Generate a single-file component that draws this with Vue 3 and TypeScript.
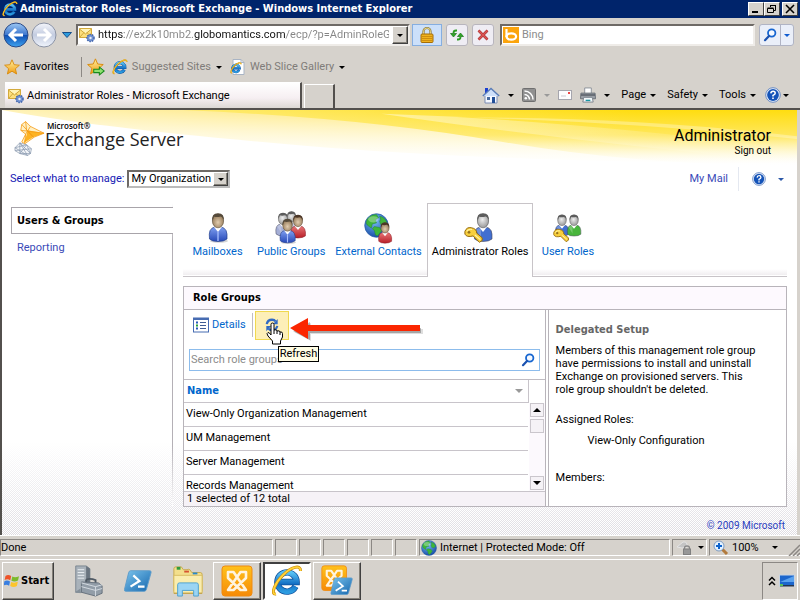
<script setup lang="ts">
import { ref } from 'vue'

interface RoleTab { id: string; label: string; icon: string; active?: boolean }
interface MenuItem { label: string }

const address = ref('https://ex2k10mb2.globomantics.com/ecp/?p=AdminRoleGro')
const webSearch = ref('')
const roleSearch = ref('')
const scope = ref('My Organization')

const menus: MenuItem[] = [{ label: 'Page' }, { label: 'Safety' }, { label: 'Tools' }]

const roleTabs: RoleTab[] = [
  { id: 'mailboxes', label: 'Mailboxes', icon: 'person' },
  { id: 'groups', label: 'Public Groups', icon: 'people' },
  { id: 'contacts', label: 'External Contacts', icon: 'contact' },
  { id: 'admin', label: 'Administrator Roles', icon: 'admin', active: true },
  { id: 'user', label: 'User Roles', icon: 'userroles' },
]

const roleGroups: string[] = [
  'View-Only Organization Management',
  'UM Management',
  'Server Management',
  'Records Management',
]
</script>

<template>
  <div class="screen">
    <svg class="sprite" width="0" height="0" aria-hidden="true">
      <defs>
        <linearGradient id="gBlue" x1="0" y1="0" x2="0" y2="1">
          <stop offset="0" stop-color="#9cc8f4" /><stop offset=".48" stop-color="#3f78cf" />
          <stop offset=".52" stop-color="#0e4fb4" /><stop offset="1" stop-color="#3fa4f0" />
        </linearGradient>
        <linearGradient id="gPale" x1="0" y1="0" x2="0" y2="1">
          <stop offset="0" stop-color="#f4f6fb" /><stop offset=".5" stop-color="#c3cce0" />
          <stop offset="1" stop-color="#f1f5fc" />
        </linearGradient>
        <linearGradient id="gGold" x1="0" y1="0" x2="0" y2="1">
          <stop offset="0" stop-color="#fff2a0" /><stop offset="1" stop-color="#f09a10" />
        </linearGradient>
        <linearGradient id="gOrange" x1="0" y1="0" x2="0" y2="1">
          <stop offset="0" stop-color="#ffc21c" /><stop offset="1" stop-color="#f68a06" />
        </linearGradient>
        <linearGradient id="gE" x1="0" y1="0" x2="0" y2="1">
          <stop offset="0" stop-color="#5ac2f4" /><stop offset=".6" stop-color="#136fc4" />
          <stop offset="1" stop-color="#2c9be0" />
        </linearGradient>
        <linearGradient id="gPs" x1="0" y1="0" x2="1" y2="1">
          <stop offset="0" stop-color="#7cc4ec" /><stop offset="1" stop-color="#1466ae" />
        </linearGradient>
        <linearGradient id="gSuit" x1="0" y1="0" x2="0" y2="1">
          <stop offset="0" stop-color="#7f9ff0" /><stop offset="1" stop-color="#2749b8" />
        </linearGradient>
        <linearGradient id="gRed" x1="0" y1="0" x2="0" y2="1">
          <stop offset="0" stop-color="#e87878" /><stop offset="1" stop-color="#b81e28" />
        </linearGradient>
        <radialGradient id="gSea" cx=".4" cy=".3" r=".8">
          <stop offset="0" stop-color="#7cc0f8" /><stop offset="1" stop-color="#0a3d9c" />
        </radialGradient>
        <radialGradient id="gSkin" cx=".5" cy=".6" r=".6">
          <stop offset="0" stop-color="#e2cdb0" /><stop offset="1" stop-color="#8f7452" />
        </radialGradient>
        <radialGradient id="gGrey" cx=".45" cy=".4" r=".7">
          <stop offset="0" stop-color="#eeeeee" /><stop offset="1" stop-color="#8c8c8c" />
        </radialGradient>
        <linearGradient id="gWave" x1="0" y1="0" x2="0" y2="1">
          <stop offset="0" stop-color="#ffdd10" /><stop offset=".45" stop-color="#ffe75c" />
          <stop offset="1" stop-color="#ffffff" stop-opacity="0" />
        </linearGradient>
        <linearGradient id="gWaveSoft" x1="0" y1="0" x2="0" y2="1">
          <stop offset="0" stop-color="#ffe25a" /><stop offset="1" stop-color="#fffbe0" stop-opacity="0" />
        </linearGradient>
        <linearGradient id="gSheen" x1="0" y1="0" x2="1" y2="0">
          <stop offset="0" stop-color="#ffffff" stop-opacity=".75" /><stop offset="1" stop-color="#ffffff" stop-opacity="0" />
        </linearGradient>
        <linearGradient id="gVeil" x1="0" y1="0" x2="1" y2="0">
          <stop offset="0" stop-color="#ffffff" stop-opacity=".55" /><stop offset=".8" stop-color="#ffffff" stop-opacity="0" />
        </linearGradient>
      </defs>

      <symbol id="ie" viewBox="0 0 32 32">
        <path d="M24.500 21.500A9.600 9.600 0 1 1 25.600 17H8.500" fill="none" stroke="#0b4c98" stroke-width="6.400" />
        <path d="M24.500 21.500A9.600 9.600 0 1 1 25.600 17H8.500" fill="none" stroke="url(#gE)" stroke-width="5" />
        <path d="M5 29C-1 30 4 18 12 10S30-1 29.500 6" fill="none" stroke="#c98705" stroke-width="3" />
        <path d="M5 29C-1 30 4 18 12 10S30-1 29.500 6" fill="none" stroke="#ffd33a" stroke-width="1.800" />
      </symbol>
      <symbol id="iepage" viewBox="0 0 16 16">
        <path d="M3 .5h8l3 3v12H3z" fill="#fff" stroke="#a9b4c4" /><path d="M11 .5v3h3" fill="none" stroke="#a9b4c4" />
        <use href="#ie" x="0" y="3" width="12" height="12" />
      </symbol>
      <symbol id="mailgear" viewBox="0 0 16 16">
        <path d="M.5 1.500h12v9H.5z" fill="#fddf7c" stroke="#d3aa3c" />
        <path d="M1 2l5.500 4.500L12 2z" fill="#fff3b8" /><path d="M.5 2l6 5 6-5M.5 10.500l4.500-5M12.500 10.500l-4.500-5" fill="none" stroke="#c59a2c" stroke-width=".8" />
        <circle cx="11.500" cy="11" r="3.500" fill="#6f8fce" stroke="#4064ac" stroke-width="1.600" stroke-dasharray="1.500 1" />
        <circle cx="11.500" cy="11" r="2.800" fill="#6f90d0" /><circle cx="11.500" cy="11" r="1.200" fill="#e9eef8" />
      </symbol>
      <symbol id="star" viewBox="0 0 16 16">
        <path d="M8 .8l2.100 4.900 5.300.5-4 3.500 1.200 5.300L8 12.200 3.400 15l1.200-5.300-4-3.500 5.300-.5z" fill="url(#gGold)" stroke="#d88a0c" stroke-width=".9" />
      </symbol>
      <symbol id="staradd" viewBox="0 0 16 16">
        <use href="#star" width="15" height="15" />
        <path d="M6 10h5V8l4.300 3.500-4.300 3.500v-2H6z" fill="#8fe070" stroke="#188a1c" stroke-width=".9" />
      </symbol>
      <symbol id="lock" viewBox="0 0 16 18">
        <path d="M4.500 8V5.500a3.500 3.500 0 0 1 7 0V8" fill="none" stroke="#8b7a3c" stroke-width="2.200" />
        <path d="M4.500 8V5.500a3.500 3.500 0 0 1 7 0V8" fill="none" stroke="#f1dc8a" stroke-width=".9" />
        <rect x="2" y="8" width="12" height="8.500" rx="1" fill="#efb21e" stroke="#a46d08" />
        <path d="M2.500 10.500h11M2.500 12.500h11M2.500 14.500h11" stroke="#c98a0d" stroke-width=".9" />
      </symbol>
      <symbol id="reload" viewBox="0 0 16 16">
        <path d="M8 3.500H7Q4.500 3.500 4.500 6M8 12.500h1q2.500 0 2.500-2.500" fill="none" stroke="#2b9d22" stroke-width="1.800" />
        <path d="M1.500 6.500h6L4.500 10zM8.500 9.500h6L11.500 6z" fill="#2fa526" stroke="#177414" stroke-width=".7" />
      </symbol>
      <symbol id="stop" viewBox="0 0 16 16">
        <path d="M3.500 3.500l9 9M12.500 3.500l-9 9" stroke="#a83030" stroke-width="2.600" /><path d="M3.500 3.500l9 9M12.500 3.500l-9 9" stroke="#dd5555" stroke-width="1.400" />
      </symbol>
      <symbol id="bing" viewBox="0 0 16 16">
        <rect width="16" height="16" fill="#fba40c" />
        <path d="M3.500 2v8" stroke="#fff" stroke-width="2.200" /><ellipse cx="8.300" cy="9.500" rx="4.800" ry="3.200" fill="none" stroke="#fff" stroke-width="2.200" />
      </symbol>
      <symbol id="mag" viewBox="0 0 16 16">
        <circle cx="9.700" cy="6" r="3.700" fill="#f5f9ff" stroke="#1766d0" stroke-width="1.800" />
        <path d="M7 9l-4 4.200" stroke="#1b52b0" stroke-width="2.200" stroke-linecap="round" />
      </symbol>
      <symbol id="home" viewBox="0 0 18 18">
        <path d="M3 2h3v5H3z" fill="#1c3fd0" />
        <path d="M3 9h12v8H3z" fill="#f5f8ff" stroke="#7b8cb4" /><path d="M.8 10L9 2.500l8.200 7.500" fill="#cfe0fa" stroke="#5a7cb6" stroke-width="1.400" />
        <path d="M10 11h3v6h-3z" fill="#234f97" /><path d="M5 11h3v3H5z" fill="#496b9f" />
      </symbol>
      <symbol id="rss" viewBox="0 0 14 14">
        <rect x=".5" y=".5" width="13" height="13" rx="1" fill="#909090" stroke="#707070" />
        <circle cx="3.800" cy="10.300" r="1.300" fill="#fff" /><path d="M2.500 6.500a5 5 0 0 1 5 5M2.500 3a8.500 8.500 0 0 1 8.500 8.500" fill="none" stroke="#fff" stroke-width="1.500" />
      </symbol>
      <symbol id="mail" viewBox="0 0 14 10">
        <rect x=".5" y=".5" width="13" height="9" fill="#fcfcfe" stroke="#a5a5ad" /><path d="M10 2h2v2h-2z" fill="#e44" /><path d="M3 6h5" stroke="#c8c8d0" />
      </symbol>
      <symbol id="printer" viewBox="0 0 17 16">
        <path d="M5 .5h7v6H5z" fill="#fff" stroke="#8a8f98" /><path d="M1 6h15l.5 6H.5z" fill="#9ba0a7" stroke="#6a7078" />
        <path d="M1 8h15" stroke="#555b64" stroke-width="1.500" /><path d="M4 10.500h9l1 5H3z" fill="#f4f8fa" stroke="#7b828c" /><path d="M6 13h5v1.500H6z" fill="#1797a4" />
      </symbol>
      <symbol id="help" viewBox="0 0 16 16">
        <circle cx="8" cy="8" r="7.300" fill="#e9f0fa" stroke="#6c8cc4" /><circle cx="8" cy="8" r="5.900" fill="#1453b8" />
        <path d="M5.800 6.400Q6 4.200 8.100 4.200t2.100 2Q10.200 7.300 8 8.400v1.200" fill="none" stroke="#fff" stroke-width="1.500" /><path d="M7.200 10.600h1.600v1.500H7.200z" fill="#fff" />
      </symbol>
      <symbol id="person" viewBox="0 0 34 34">
        <ellipse cx="18" cy="31" rx="9" ry="1.800" fill="#888" opacity=".35" />
        <path d="M8.500 29Q7 18 14 17h6q7 1 6 12-3 2.500-9 2.500T8.500 29z" fill="url(#gSuit)" stroke="#24408e" stroke-width=".7" />
        <path d="M13 17l4 5 4-5" fill="#fff" /><path d="M17 22v9" stroke="#a9c0ff" stroke-width="1.300" />
        <ellipse cx="17" cy="11" rx="5.600" ry="6.800" fill="url(#gSkin)" stroke="#5a4a34" stroke-width=".6" />
        <path d="M11.400 11Q10 3.500 17 3.200 24 3.500 22.600 11q-.5-4-3-4.500-4 1-6.500 0z" fill="#554a3a" />
      </symbol>
      <symbol id="redperson" viewBox="0 0 34 34">
        <path d="M8.500 29Q7 18 14 17h6q7 1 6 12-3 2.500-9 2.500T8.500 29z" fill="url(#gRed)" stroke="#8c2028" stroke-width=".7" />
        <path d="M13 17l4 5 4-5" fill="#fff" />
        <ellipse cx="17" cy="11" rx="5.600" ry="6.800" fill="url(#gSkin)" stroke="#5a4a34" stroke-width=".6" />
        <path d="M11.400 11Q10 3.500 17 3.200 24 3.500 22.600 11q-.5-4-3-4.500-4 1-6.500 0z" fill="#4a3526" />
      </symbol>
      <symbol id="greyhead" viewBox="0 0 34 34">
        <path d="M8.500 29Q7 18 14 17h6q7 1 6 12-3 2.500-9 2.500T8.500 29z" fill="currentColor" stroke="#445" stroke-width=".6" />
        <path d="M13 17l4 5 4-5" fill="#fff" /><path d="M10 20q2-3 5-1v9" fill="#fff" opacity=".25" />
        <ellipse cx="17" cy="11" rx="5.600" ry="6.800" fill="url(#gGrey)" stroke="#555" stroke-width=".6" />
        <path d="M11.400 11Q10 3.500 17 3.200 24 3.500 22.600 11q-.5-4-3-4.500-4 1-6.500 0z" fill="#5c5c5c" />
      </symbol>
      <symbol id="people" viewBox="0 0 34 34">
        <use href="#greyhead" x="-5" y="0" width="28" height="28" color="#a4aed6" />
        <use href="#greyhead" x="5" y="-1" width="25" height="25" color="#c9cce0" />
        <use href="#redperson" x="10" y="2" width="28" height="28" />
        <use href="#person" x="-1" y="6" width="29" height="29" />
      </symbol>
      <symbol id="globe" viewBox="0 0 24 24">
        <circle cx="12" cy="12" r="11.300" fill="url(#gSea)" stroke="#2a5ca8" stroke-width=".7" />
        <path d="M3 6Q7 1 12 1.500l2 3-3 2 1 3-4 1-1 4-4-3-1-2zM15 3q5 1 7 6l-3 3-3-1-1-3 1-2zM10 13l5 1 2 3-4 5-2-1-1-4-2-2z" fill="#3eb53a" stroke="#1d7d30" stroke-width=".4" />
        <ellipse cx="9" cy="6" rx="5" ry="3" fill="#fff" opacity=".3" />
      </symbol>
      <symbol id="contact" viewBox="0 0 34 34">
        <use href="#globe" x="2" y="3" width="25" height="25" /><use href="#redperson" x="10" y="10" width="26" height="25" />
      </symbol>
      <symbol id="key" viewBox="0 0 22 18">
        <path d="M1 5Q3 0 8 1q6 1 6 6l6 5v3l-3 2-7-7Q3 12 1 8z" fill="#f8cf3c" stroke="#93690c" stroke-width="1.100" />
        <path d="M3 5q2-3 6-2M12 9l6 5" fill="none" stroke="#fff3a6" stroke-width="1.200" /><circle cx="5.500" cy="6" r="1.500" fill="#94701c" />
      </symbol>
      <symbol id="admin" viewBox="0 0 34 34">
        <use href="#greyhead" x="2" y="0" width="36" height="34" color="#426fd0" /><use href="#key" x="1" y="16" width="20" height="18" />
      </symbol>
      <symbol id="userroles" viewBox="0 0 34 34">
        <use href="#greyhead" x="-2" y="2" width="26" height="26" color="#426fd0" /><use href="#greyhead" x="10" y="2" width="26" height="26" color="#48b53c" />
        <use href="#key" x="2" y="18" width="17" height="15" />
      </symbol>
      <symbol id="exchange" viewBox="0 0 32 32">
        <rect x="1" y="1" width="30" height="30" rx="3" fill="url(#gOrange)" stroke="#f08b10" />
        <path d="M7 7h5.500L25 25h-5.500L7 13zM25 7h-5.500L7 25h5.500L25 13z" fill="none" stroke="#fff4df" stroke-width="2.600" stroke-linejoin="round" />
      </symbol>
      <symbol id="ps" viewBox="0 0 30 26">
        <path d="M7 2h20.500q2 0 1.500 2l-5 18q-.5 2-2.500 2H2q-2 0-1.500-2L5 4q.5-2 2-2z" fill="url(#gPs)" stroke="#5d9bc9" />
        <path d="M10 7l6.500 6L7 19M15 19h7" fill="none" stroke="#fff" stroke-width="2.400" />
      </symbol>
      <symbol id="exps" viewBox="0 0 34 34">
        <use href="#exchange" x="0" y="0" width="28" height="28" /><use href="#ps" x="10" y="12" width="24" height="21" />
      </symbol>
    </svg>

    <header class="titlebar">
      <svg class="i16"><use href="#ie" /></svg>
      <h1>Administrator Roles - Microsoft Exchange - Windows Internet Explorer</h1>
      <div class="window-buttons">
        <button aria-label="Minimize"><svg viewBox="0 0 12 10"><path d="M2 8h6" stroke="#000" stroke-width="2" /></svg></button>
        <button aria-label="Restore"><svg viewBox="0 0 12 10"><path d="M4.500 3V1.500h5v5H8M4 1.500h6M1.500 4.500h6v4h-6zM1.500 4h6" fill="none" stroke="#000" /></svg></button>
        <button class="close" aria-label="Close"><svg viewBox="0 0 12 10"><path d="M2 1l8 8M10 1L2 9" stroke="#000" stroke-width="1.600" /></svg></button>
      </div>
    </header>

    <nav class="navbar" aria-label="Navigation">
      <div class="travel">
        <button aria-label="Back">
          <svg viewBox="0 0 26 26"><circle cx="13" cy="13" r="12" fill="url(#gBlue)" stroke="#2b4a86" /><path d="M20 13H8M13 7l-6 6 6 6" fill="none" stroke="#fff" stroke-width="3" /></svg>
        </button>
        <button aria-label="Forward">
          <svg viewBox="0 0 26 26"><circle cx="13" cy="13" r="12" fill="url(#gPale)" stroke="#8b93a5" /><path d="M6 13h12M13 7l6 6-6 6" fill="none" stroke="#fff" stroke-width="3" /></svg>
        </button>
        <button class="recent" aria-label="Recent pages"><svg viewBox="0 0 10 6"><path d="M.5.500h9L5 5.500z" fill="#2c9bdc" stroke="#164f8c" /></svg></button>
      </div>
      <div class="address sunken">
        <svg class="i16"><use href="#mailgear" /></svg>
        <input v-model="address" type="text" aria-label="Address">
        <button class="raised drop" aria-label="Show address list"><i class="caret"></i></button>
      </div>
      <button class="lock" aria-label="Security report"><svg><use href="#lock" /></svg></button>
      <button class="tool" aria-label="Reload page"><svg class="i16"><use href="#reload" /></svg></button>
      <button class="tool" aria-label="Stop"><svg class="i16"><use href="#stop" /></svg></button>
      <div class="websearch sunken">
        <svg class="i16"><use href="#bing" /></svg>
        <input v-model="webSearch" type="text" placeholder="Bing" aria-label="Search the web">
      </div>
      <div class="searchgo">
        <button aria-label="Search"><svg class="i16"><use href="#mag" /></svg></button>
        <button class="more" aria-label="Search options"><i class="caret blue"></i></button>
      </div>
    </nav>

    <div class="favorites">
      <button><svg class="i16"><use href="#star" /></svg>Favorites</button>
      <button class="addfav" aria-label="Add to Favorites bar"><svg class="i18"><use href="#staradd" /></svg></button>
      <button class="dim"><svg class="i16"><use href="#ie" /></svg>Suggested Sites<i class="caret"></i></button>
      <button class="dim"><svg class="i16"><use href="#iepage" /></svg>Web Slice Gallery<i class="caret"></i></button>
    </div>

    <div class="tabrow">
      <button class="pagetab"><svg class="i16"><use href="#mailgear" /></svg>Administrator Roles - Microsoft Exchange</button>
      <button class="newtab" aria-label="New tab"></button>
      <div class="commands">
        <button aria-label="Home"><svg class="i18"><use href="#home" /></svg><i class="caret"></i></button>
        <button aria-label="Feeds"><svg class="i14"><use href="#rss" /></svg><i class="caret faint"></i></button>
        <button aria-label="Read mail"><svg class="i14"><use href="#mail" /></svg></button>
        <button aria-label="Print"><svg class="i16"><use href="#printer" /></svg><i class="caret"></i></button>
        <button v-for="m in menus" :key="m.label" class="menu">{{ m.label }}<i class="caret"></i></button>
        <button class="helpmenu" aria-label="Help"><svg class="i16"><use href="#help" /></svg><i class="caret"></i></button>
      </div>
    </div>

    <main class="page">
      <section class="banner">
        <svg class="wave" viewBox="0 0 796 60" preserveAspectRatio="none" aria-hidden="true">
          <path d="M0 0H796V58Q500 56 300 38T0 0z" fill="url(#gWaveSoft)" />
          <path d="M180 0H796V60Q640 60 500 34T180 0z" fill="url(#gWave)" />
          <path d="M380 4Q560 10 796 42v14Q570 34 380 4z" fill="url(#gSheen)" opacity=".6" />
          <path d="M470 8Q640 8 796 28v3Q640 14 470 8z" fill="#fff" opacity=".3" />
          <rect width="796" height="60" fill="url(#gVeil)" />
        </svg>
        <div class="logo">
          <svg viewBox="0 0 32 36" aria-hidden="true">
            <path d="M8 3l4-3 5 5 14 7-10 4-10 7-3-2 4-8-5-4z" fill="#fff0c4" />
            <path d="M14 9l17 3-11 4-10 6 3-8z" fill="#fdb322" />
            <path d="M8 3l4-3 5 5 14 7-10 4-10 7-3-2 4-8-5-4zM7 9l24 3M12 0l1 9 7 7M17 5l-5 8M12 13l-1 10M8 3l12 13" fill="none" stroke="#f59a12" stroke-width=".8" />
            <path d="M1 27l5-5 7 2 5 4-1 5-3 2-8-2-5-3z" fill="#f3f5f8" stroke="#95a3b7" stroke-width=".8" />
            <path d="M1 27l12-3 4 9-11 0 0-11 8 13M1 30l17-2M6 22l11 11M13 24l-7 9M1 27l13 8" fill="none" stroke="#8797ad" stroke-width=".7" />
          </svg>
          <div class="wordmark"><small>Microsoft®</small><strong>Exchange Server</strong></div>
        </div>
        <div class="account"><b>Administrator</b><a href="#signout">Sign out</a></div>
      </section>

      <section class="scope">
        <label for="scope">Select what to manage:</label>
        <span class="combo">
          <select id="scope" v-model="scope"><option>My Organization</option></select>
          <span class="raised knob"><i class="caret"></i></span>
        </span>
        <a class="mymail" href="#mail">My Mail</a>
        <button class="pagehelp" aria-label="Help"><svg class="i14"><use href="#help" /></svg><i class="caret navy"></i></button>
      </section>

      <div class="columns">
        <aside class="sidebar">
          <a class="current" href="#users">Users &amp; Groups</a>
          <a href="#reporting">Reporting</a>
        </aside>

        <div class="main">
          <nav class="roletabs" aria-label="Sections">
            <a v-for="t in roleTabs" :key="t.id" :href="'#' + t.id" :class="{ active: t.active }">
              <svg><use :href="'#' + t.icon" /></svg>{{ t.label }}
            </a>
          </nav>

          <section class="panel">
            <h2>Role Groups</h2>
            <div class="split">
              <div class="list">
                <div class="toolbar">
                  <button class="details">
                    <svg class="i16" viewBox="0 0 16 16"><rect x=".5" y="1" width="15" height="14" fill="#fff" stroke="#476cb2" /><path d="M1 2h14" stroke="#476cb2" stroke-width="2" /><path d="M3 5.500h2M3 11.500h2" stroke="#2a58ba" stroke-width="2" /><path d="M3 8.500h2" stroke="#28a038" stroke-width="2" /><path d="M7 5.500h6M7 8.500h6M7 11.500h6" stroke="#3f5c94" /></svg>
                    Details
                  </button>
                  <div class="refresh">
                    <button aria-label="Refresh">
                      <svg viewBox="0 0 16 16"><path d="M2 7Q3 2 8 2q3 0 4 2M14 9q-1 5-6 5-3 0-4-2" fill="none" stroke="#316ac4" stroke-width="2.600" /><path d="M14.500 1v6H9zM1.500 15V9H7z" fill="#316ac4" /></svg>
                    </button>
                    <svg class="pointer-arrow" viewBox="0 0 136 28" aria-hidden="true">
                      <path d="M3 12L20 3v6h112v5H20v7z" fill="#222" opacity=".15" transform="translate(2 3)" />
                      <path d="M3 12L20 3v6h111v5H20v7z" fill="#222" opacity=".3" transform="translate(1 2)" />
                      <path d="M1 11L19 1v7h112v6H19v8z" fill="#fb2600" />
                    </svg>
                    <svg class="hand" viewBox="0 0 18 23" aria-hidden="true">
                      <path d="M5 13V2.500Q5 1 6.500 1T8 2.500V8q3-1 3 1 3-.8 3 1 2.500-.5 2.500 1.500V15l-2 4v3h-8v-3L2 14q-2-3 0-3.500 1.500 0 3 2.500z" fill="#fff" stroke="#000" />
                      <path d="M8 8v4M11 9v3M14 10v3" stroke="#000" />
                    </svg>
                    <span class="tip" role="tooltip">Refresh</span>
                  </div>
                </div>
                <div class="rolesearch">
                  <input v-model="roleSearch" type="text" placeholder="Search role groups" aria-label="Search role groups">
                  <button aria-label="Search role groups now"><svg class="i16"><use href="#mag" /></svg></button>
                </div>
                <div class="grid">
                  <table>
                    <thead><tr><th>Name<i class="caret sort"></i></th></tr></thead>
                    <tbody><tr v-for="g in roleGroups" :key="g"><td>{{ g }}</td></tr></tbody>
                  </table>
                  <div class="scrollbar">
                    <button aria-label="Scroll up"><i class="caret up"></i></button>
                    <span class="thumb"></span>
                    <button class="down" aria-label="Scroll down"><i class="caret big"></i></button>
                  </div>
                </div>
                <p class="count">1 selected of 12 total</p>
              </div>
              <article class="info">
                <h3>Delegated Setup</h3>
                <p>Members of this management role group have permissions to install and uninstall Exchange on provisioned servers. This role group shouldn't be deleted.</p>
                <h4>Assigned Roles:</h4>
                <p class="indent">View-Only Configuration</p>
                <h4 class="members">Members:</h4>
              </article>
            </div>
          </section>
        </div>
      </div>
      <footer class="legal">© 2009 Microsoft</footer>
    </main>

    <footer class="status">
      <span class="cell done">Done</span>
      <span v-for="n in 6" :key="n" class="cell slot"></span>
      <span class="cell zone"><svg class="i16"><use href="#globe" /></svg>Internet | Protected Mode: Off</span>
      <button class="cell filter" aria-label="Privacy">
        <svg class="i16" viewBox="0 0 16 16"><path d="M1 7l6-5q3-1 4 2v3l-5 1z" fill="#c4c4c4" stroke="#e4e4e4" /><path d="M8.500 10V8q0-2 2.500-2t2.500 2v2" fill="none" stroke="#888" stroke-width="1.300" /><rect x="7.500" y="9" width="7" height="5.500" fill="#979797" stroke="#808080" /></svg>
        <i class="caret"></i>
      </button>
      <button class="cell zoom">
        <svg class="i16" viewBox="0 0 16 16"><path d="M9 9l5 5" stroke="#b27a3c" stroke-width="3" /><circle cx="6" cy="6" r="5" fill="#e4f2ff" stroke="#7f9cc0" /><path d="M6 3v6M3 6h6" stroke="#0e63cc" stroke-width="2" /></svg>
        100%<i class="caret"></i>
        <svg class="grip" viewBox="0 0 12 12"><path d="M1 12L12 1M5 12l7-7M9 12l3-3" stroke="#8c8884" stroke-width="1.500" /></svg>
      </button>
    </footer>

    <footer class="taskbar">
      <button class="start raised">
        <svg viewBox="0 0 16 16"><path d="M1.500 3Q4 1 7.200 3L6.300 7.300Q3.500 5.500.6 7z" fill="#ee5328" /><path d="M8.300 3.500Q11 5 15 3.300L14 7.600Q10.500 9.300 7.400 7.700z" fill="#7cba2c" /><path d="M.4 8.200Q3.300 6.800 6 8.500L5.100 12.700Q2.500 11.200-.3 12.400z" fill="#3a7fe0" /><path d="M7.200 8.900Q10.200 10.400 13.800 8.800L12.900 13Q9.500 14.800 6.200 13z" fill="#fcc52c" /></svg>
        Start
      </button>
      <button class="launch" aria-label="Server Manager">
        <svg viewBox="0 0 34 34"><path d="M4 1h11l4 3v25H4z" fill="#a9b2ba" stroke="#7a858f" /><path d="M15 1l4 3v25h-4z" fill="#69747f" /><path d="M6 5h7M6 8h7M6 11h7M6 14h7" stroke="#edf1f4" /><path d="M3 29l6-4v5z" fill="#848f99" /><path d="M15 19v-3q1-2 7-1l3 1v3" fill="none" stroke="#4f5963" stroke-width="2" /><path d="M10 18l18 1 4 3v8l-7 3-15-4z" fill="#929da8" stroke="#65707c" /><path d="M10 19l15 4v10M25 23l7-2M10 23l15 4 7-2" fill="none" stroke="#d5dce2" /></svg>
      </button>
      <button class="launch" aria-label="PowerShell"><svg><use href="#ps" /></svg></button>
      <button class="launch" aria-label="Explorer">
        <svg viewBox="0 0 34 34"><path d="M2 4q0-2 2-2h6l2 3h4q1-1 3 0l2 3h9q2 0 2 2v18H2z" fill="#f3df8c" stroke="#c9a94c" /><path d="M5 2h4v3H5z" fill="#2f9c3c" /><path d="M13 6h5v2h-5z" fill="#d65432" /><path d="M22 8h5v2h-5z" fill="#2688d0" /><path d="M2 11h30v19H2z" fill="#faedae" stroke="#d8bd62" /><path d="M2 30h30" stroke="#bb993c" /><path d="M6 33V21q0-2 2-2h18q2 0 2 2v12h-5v-6H11v6z" fill="#9bd5f4" stroke="#4b9fd0" /></svg>
      </button>
      <button class="task raised" aria-label="Exchange Console"><svg><use href="#exchange" /></svg></button>
      <button class="task pressed" aria-label="Internet Explorer"><svg><use href="#ie" /></svg></button>
      <button class="task raised" aria-label="Exchange Shell"><svg><use href="#exps" /></svg></button>
      <div class="tray">
        <svg class="chev" viewBox="0 0 8 10"><path d="M1 4.500l3-3 3 3M1 9l3-3 3 3" fill="none" stroke="#000" stroke-width="1.500" /></svg>
        <svg class="i16" viewBox="0 0 16 14"><rect x=".5" y="1" width="15" height="11" fill="#1c66cc" stroke="#c6d3e4" /><path d="M1 8L15 2v6z" fill="#5aa2ee" /><path d="M1 11h14v1.500H1z" fill="#26354c" /><path d="M1 10h3v2H1z" fill="#5ac05a" /></svg>
      </div>
    </footer>
  </div>
</template>

<style>
body { margin: 0; background: #d6d2cc; }
</style>

<style scoped>
.screen { min-height: 100vh; display: flex; flex-direction: column; background: #d6d2cc; color: #000; font: 11px/14px Roboto, "Liberation Sans", sans-serif; }
.screen * { box-sizing: border-box; }
.sprite { position: absolute; }
svg { display: block; flex: none; }
button, input, select { font: inherit; color: inherit; margin: 0; padding: 0; border: 0; background: none; border-radius: 0; outline: 0; }
button { display: flex; align-items: center; white-space: nowrap; }
a { text-decoration: none; color: #0066cc; }
h1, h2, h3, h4, p { margin: 0; font-size: inherit; }
h1, h2, h3, th, .current, .start { font-family: "DejaVu Sans Condensed", "Noto Sans", sans-serif; }
input { min-width: 0; }
input::placeholder { color: #8c8c8c; opacity: 1; }
.i14 { width: 14px; height: 14px; }
.i16 { width: 16px; height: 16px; }
.i18 { width: 18px; height: 18px; }
.caret { display: inline-block; flex: none; width: 0; height: 0; border: 3px solid transparent; border-top-color: #000; border-bottom: 0; }
.caret.blue { border-top-color: #0f5cd0; }
.caret.navy { border-top-color: #2c58a8; }
.caret.faint { border-top-color: #999; }
.caret.big { border-width: 4px 4px 0; }
.caret.up { border: 4px solid transparent; border-top: 0; border-bottom-color: #000; }
.raised { background: #d6d2cc; border: 1px solid; border-color: #fff #404040 #404040 #fff; box-shadow: inset -1px -1px #848078; }
.sunken { background: #fff; border: 2px solid; border-color: #6e6a66 #efece8 #efece8 #6e6a66; display: flex; align-items: center; }

.titlebar { height: 18px; padding: 0 2px; display: flex; align-items: center; gap: 2px; background: #00246b; color: #fff; }
.titlebar h1 { flex: 1; font-weight: bold; white-space: nowrap; overflow: hidden; }
.window-buttons { display: flex; }
.window-buttons button { width: 16px; height: 14px; justify-content: center; background: #d6d2cc; border: 1px solid; border-color: #fff #404040 #404040 #fff; }
.window-buttons svg { width: 12px; height: 10px; }
.window-buttons .close { margin-left: 2px; }

.navbar { height: 34px; padding: 0 6px 0 3px; display: flex; align-items: center; }
.travel { display: flex; align-items: center; gap: 2px; width: 73px; }
.travel svg { width: 26px; height: 26px; }
.travel .recent { margin-left: 3px; }
.travel .recent svg { width: 10px; height: 6px; }
.address { flex: 1 1 334px; height: 22px; padding-left: 1px; gap: 3px; }
.address input { flex: 1; color: transparent; background: linear-gradient(90deg, #111 26px, #858585 26px 96px, #111 96px 188px, #858585 188px); background-clip: text; -webkit-background-clip: text; }
.drop { width: 16px; height: 18px; justify-content: center; }
.lock { width: 30px; height: 22px; margin-left: 2px; justify-content: center; background: #cce0fa; border: 1px solid #86aee0; }
.lock svg { width: 16px; height: 18px; }
.tool { width: 22px; height: 22px; margin-left: 4px; justify-content: center; background: #efedf4; border: 1px solid #b8b5bd; border-radius: 3px; }
.websearch { flex: 1 1 255px; height: 22px; margin-left: 6px; gap: 3px; padding-left: 1px; }
.websearch input { flex: 1; }
.searchgo { display: flex; margin-left: 4px; height: 22px; width: 35px; border: 1px solid #b0b4c4; border-radius: 3px; background: #eaeff9; }
.searchgo button { flex: 1; justify-content: center; }
.searchgo .more { flex: 0 0 13px; border-left: 1px solid #b0b4c4; }

.favorites { height: 30px; padding: 0 4px; display: flex; align-items: center; }
.favorites button { gap: 4px; }
.favorites .addfav { margin: 0 7px 0 12px; padding-left: 5px; height: 20px; border-left: 1px solid #8c8884; }
.favorites .dim { color: #7f7c79; margin-right: 8px; }
.favorites .caret { margin-left: 1px; }

.tabrow { height: 28px; padding-left: 5px; display: flex; align-items: flex-end; border-bottom: 2px solid #53504d; }
.pagetab { width: 297px; height: 26px; gap: 3px; padding-left: 3px; background: linear-gradient(#fff, #f6eff2 60%, #dcd8d4); border-right: 2px solid #53504d; border-top: 1px solid #fff; }
.newtab { width: 31px; height: 24px; margin-left: 2px; border: 1px solid #fff; border-bottom: 0; border-right: 2px solid #53504d; }
.commands { flex: 1; height: 26px; display: flex; align-items: center; justify-content: flex-end; padding: 0 11px 0 0; }
.commands button { gap: 8px; margin-left: 8px; }
.commands .menu { gap: 4px; margin-left: 11px; }
.commands .helpmenu { gap: 2px; margin-left: 9px; }

.page { flex: 1; display: flex; flex-direction: column; border-left: 2px solid #53504d; border-right: 3px solid #d6d2cc; background: linear-gradient(#fff 0 78%, rgba(255, 255, 255, 0)), repeating-conic-gradient(#dfdce2 0 25%, #fff 0 50%) 0 0 / 2px 2px; }
.banner { position: relative; height: 56px; display: flex; justify-content: space-between; padding: 11px 26px 0 12px; }
.wave { position: absolute; inset: 0; width: 100%; height: 100%; }
.logo { position: relative; display: flex; align-items: flex-start; }
.logo svg { width: 31px; height: 36px; }
.wordmark { display: flex; flex-direction: column; font-family: "Open Sans", sans-serif; }
.wordmark small { font-size: 8px; line-height: 9px; font-weight: 600; padding-left: 2px; }
.wordmark strong { font-size: 18px; line-height: 18px; font-weight: 400; color: #222; }
.account { position: relative; display: flex; flex-direction: column; align-items: flex-end; padding-top: 5px; }
.account b { font-size: 16px; line-height: 20px; font-weight: 400; }
.account a { font-size: 10px; line-height: 10px; color: #000; }
.scope { height: 26px; display: flex; align-items: center; padding: 0 13px 0 8px; margin-bottom: 6px; }
.scope label { color: #1418b4; margin-right: 3px; }
.combo { display: flex; width: 103px; height: 18px; border: 2px solid #6e6a66; border-right-color: #bbb; border-bottom-color: #bbb; background: #fff; }
.combo select { appearance: none; flex: 1; min-width: 0; padding-left: 2px; }
.knob { width: 15px; display: flex; align-items: center; justify-content: center; pointer-events: none; }
.mymail { margin-left: auto; padding-right: 10px; color: #3a4ab8; }
.pagehelp { gap: 12px; padding-left: 13px; height: 24px; border-left: 1px solid #e4e8f0; }

.columns { flex: 1; display: flex; padding: 5px 10px 0 9px; }
.sidebar { width: 162px; display: flex; flex-direction: column; padding-top: 4px; background: linear-gradient(#ffffff, #b4b0b6 12%, #b4b0b6 80%, #ffffff) right / 1px 100% no-repeat; }
.sidebar a { padding: 7px 6px; line-height: 13px; color: #3a4ab8; }
.sidebar .current { padding: 6px 5px; background: #fff; border: 1px solid #a8a4aa; border-right: 0; color: #000; font-weight: bold; }
.main { flex: 1; min-width: 0; margin-left: 10px; display: flex; flex-direction: column; }
.roletabs { height: 74px; display: flex; background: linear-gradient(transparent, #f0eef0) bottom 1px left / 100% 6px no-repeat; border-bottom: 1px solid #c8c4c8; }
.roletabs a { display: flex; flex-direction: column; align-items: center; min-width: 69px; height: 74px; padding: 7px 4px 0; border: 1px solid transparent; border-width: 0 1px; white-space: nowrap; }
.roletabs a.active { color: #000; background: #fff; border-color: #c8c4c8; box-shadow: inset 0 1px #c8c4c8; }
.roletabs svg { width: 34px; height: 34px; margin-bottom: 1px; }

.panel { flex: 1; margin-top: 9px; border: 1px solid #b8b4ba; background: #fff; display: flex; flex-direction: column; }
.panel h2 { padding: 4px 9px; background: #fdf9fe; border-bottom: 1px solid #b8b4ba; font-weight: bold; }
.split { flex: 1; display: flex; }
.list { flex: 3 1 361px; min-width: 0; display: flex; flex-direction: column; border-right: 1px solid #b8b4ba; }
.toolbar { height: 30px; display: flex; align-items: center; padding-left: 9px; }
.details { color: #0066cc; gap: 3px; padding-right: 6px; height: 24px; border-right: 1px solid #c0bcc2; }
.refresh { position: relative; margin-left: 2px; }
.refresh button { width: 34px; height: 29px; justify-content: center; background: #fdefb8; border: 1px solid #f0d850; }
.refresh button svg { width: 14px; height: 16px; }
.pointer-arrow { position: absolute; left: 34px; top: 6px; width: 136px; height: 28px; }
.hand { position: absolute; left: 11px; top: 11px; width: 18px; height: 23px; z-index: 2; }
.tip { position: absolute; left: 23px; top: 35px; z-index: 1; padding: 0 1px; background: #fffde4; border: 1px solid #000; }
.rolesearch { margin: 9px 5px 8px; height: 22px; display: flex; align-items: center; border: 1px solid #8cbcec; background: #fff; }
.rolesearch input { flex: 1; padding-left: 1px; }
.rolesearch button { padding: 0 3px; }
.grid { flex: 1 0 112px; height: 112px; overflow: hidden; display: flex; border-top: 1px solid #c0bcc2; }
table { flex: 1; border-collapse: collapse; height: 118px; }
th, td { height: 24px; padding: 0 2px; text-align: left; border-bottom: 1px solid #c8c4ca; }
th { height: 22px; padding: 0 5px 0 3px; color: #0066cc; border-right: 1px solid #c8c4ca; }
th .sort { float: right; margin-top: 5px; border-width: 4px 4px 0; border-top-color: #999; }
.scrollbar { width: 16px; margin-top: 23px; padding: 0 1px; display: flex; flex-direction: column; gap: 2px; background: #fcf9fd; }
.scrollbar button, .thumb { width: 14px; height: 14px; justify-content: center; background: #f5f2f6; border: 1px solid #cac6cc; }
.scrollbar .down { margin-top: auto; margin-bottom: 1px; }
.count { height: 15px; padding: 0 3px; background: #f6f2f7; border-top: 1px solid #c8c4ca; }
.info { flex: 2 1 238px; min-width: 0; margin-left: 2px; padding: 13px 24px 0 7px; border-left: 1px solid #b8b4ba; line-height: 13px; }
.info h3 { color: #666; line-height: 14px; margin-bottom: 7px; }
.info h4 { font-weight: 400; margin-top: 17px; }
.info .indent { margin: 8px 0 0 32px; }
.info .members { margin-top: 24px; }
.legal { height: 28px; padding: 12px 12px 0; line-height: 14px; text-align: right; color: #2c40c0; font-size: 10px; }

.status { height: 24px; padding: 3px 0; display: flex; gap: 2px; border-top: 1px solid #fff; }
.cell { display: flex; align-items: center; border: 1px solid; border-color: #8c8884 #fff #fff #8c8884; white-space: nowrap; }
.done { flex: 273 1 0; padding-left: 0; }
.slot { flex: 0 0 22px; }
.zone { flex: 250 1 0; gap: 3px; padding-left: 1px; }
.filter { flex: 0 0 35px; gap: 6px; padding-left: 3px; }
.zoom { flex: 0 0 91px; gap: 3px; padding-left: 3px; border-right: 0; }
.zoom .caret { margin-left: 10px; }
.grip { width: 12px; height: 12px; margin: 4px 0 0 auto; }
.taskbar { height: 42px; padding: 2px; display: flex; align-items: center; border-top: 1px solid #fff; }
.start { width: 52px; height: 38px; gap: 1px; padding-left: 1px; font-weight: bold; margin-right: 9px; }
.start svg { width: 16px; height: 16px; }
.launch { width: 50px; height: 38px; justify-content: center; }
.launch svg { width: 32px; height: 32px; }
.launch:nth-child(3) svg { width: 28px; height: 26px; }
.task { width: 48px; height: 38px; margin-right: 2px; justify-content: center; }
.task svg { width: 32px; height: 32px; }
.pressed { background: #fff; border: 2px solid; border-color: #404040 #fff #fff #404040; }
.tray { margin-left: auto; width: 36px; height: 38px; padding: 0 2px 0 5px; display: flex; align-items: center; justify-content: space-between; border: 1px solid; border-color: #8c8884 #fff #fff #8c8884; }
.chev { width: 8px; height: 10px; }
</style>
